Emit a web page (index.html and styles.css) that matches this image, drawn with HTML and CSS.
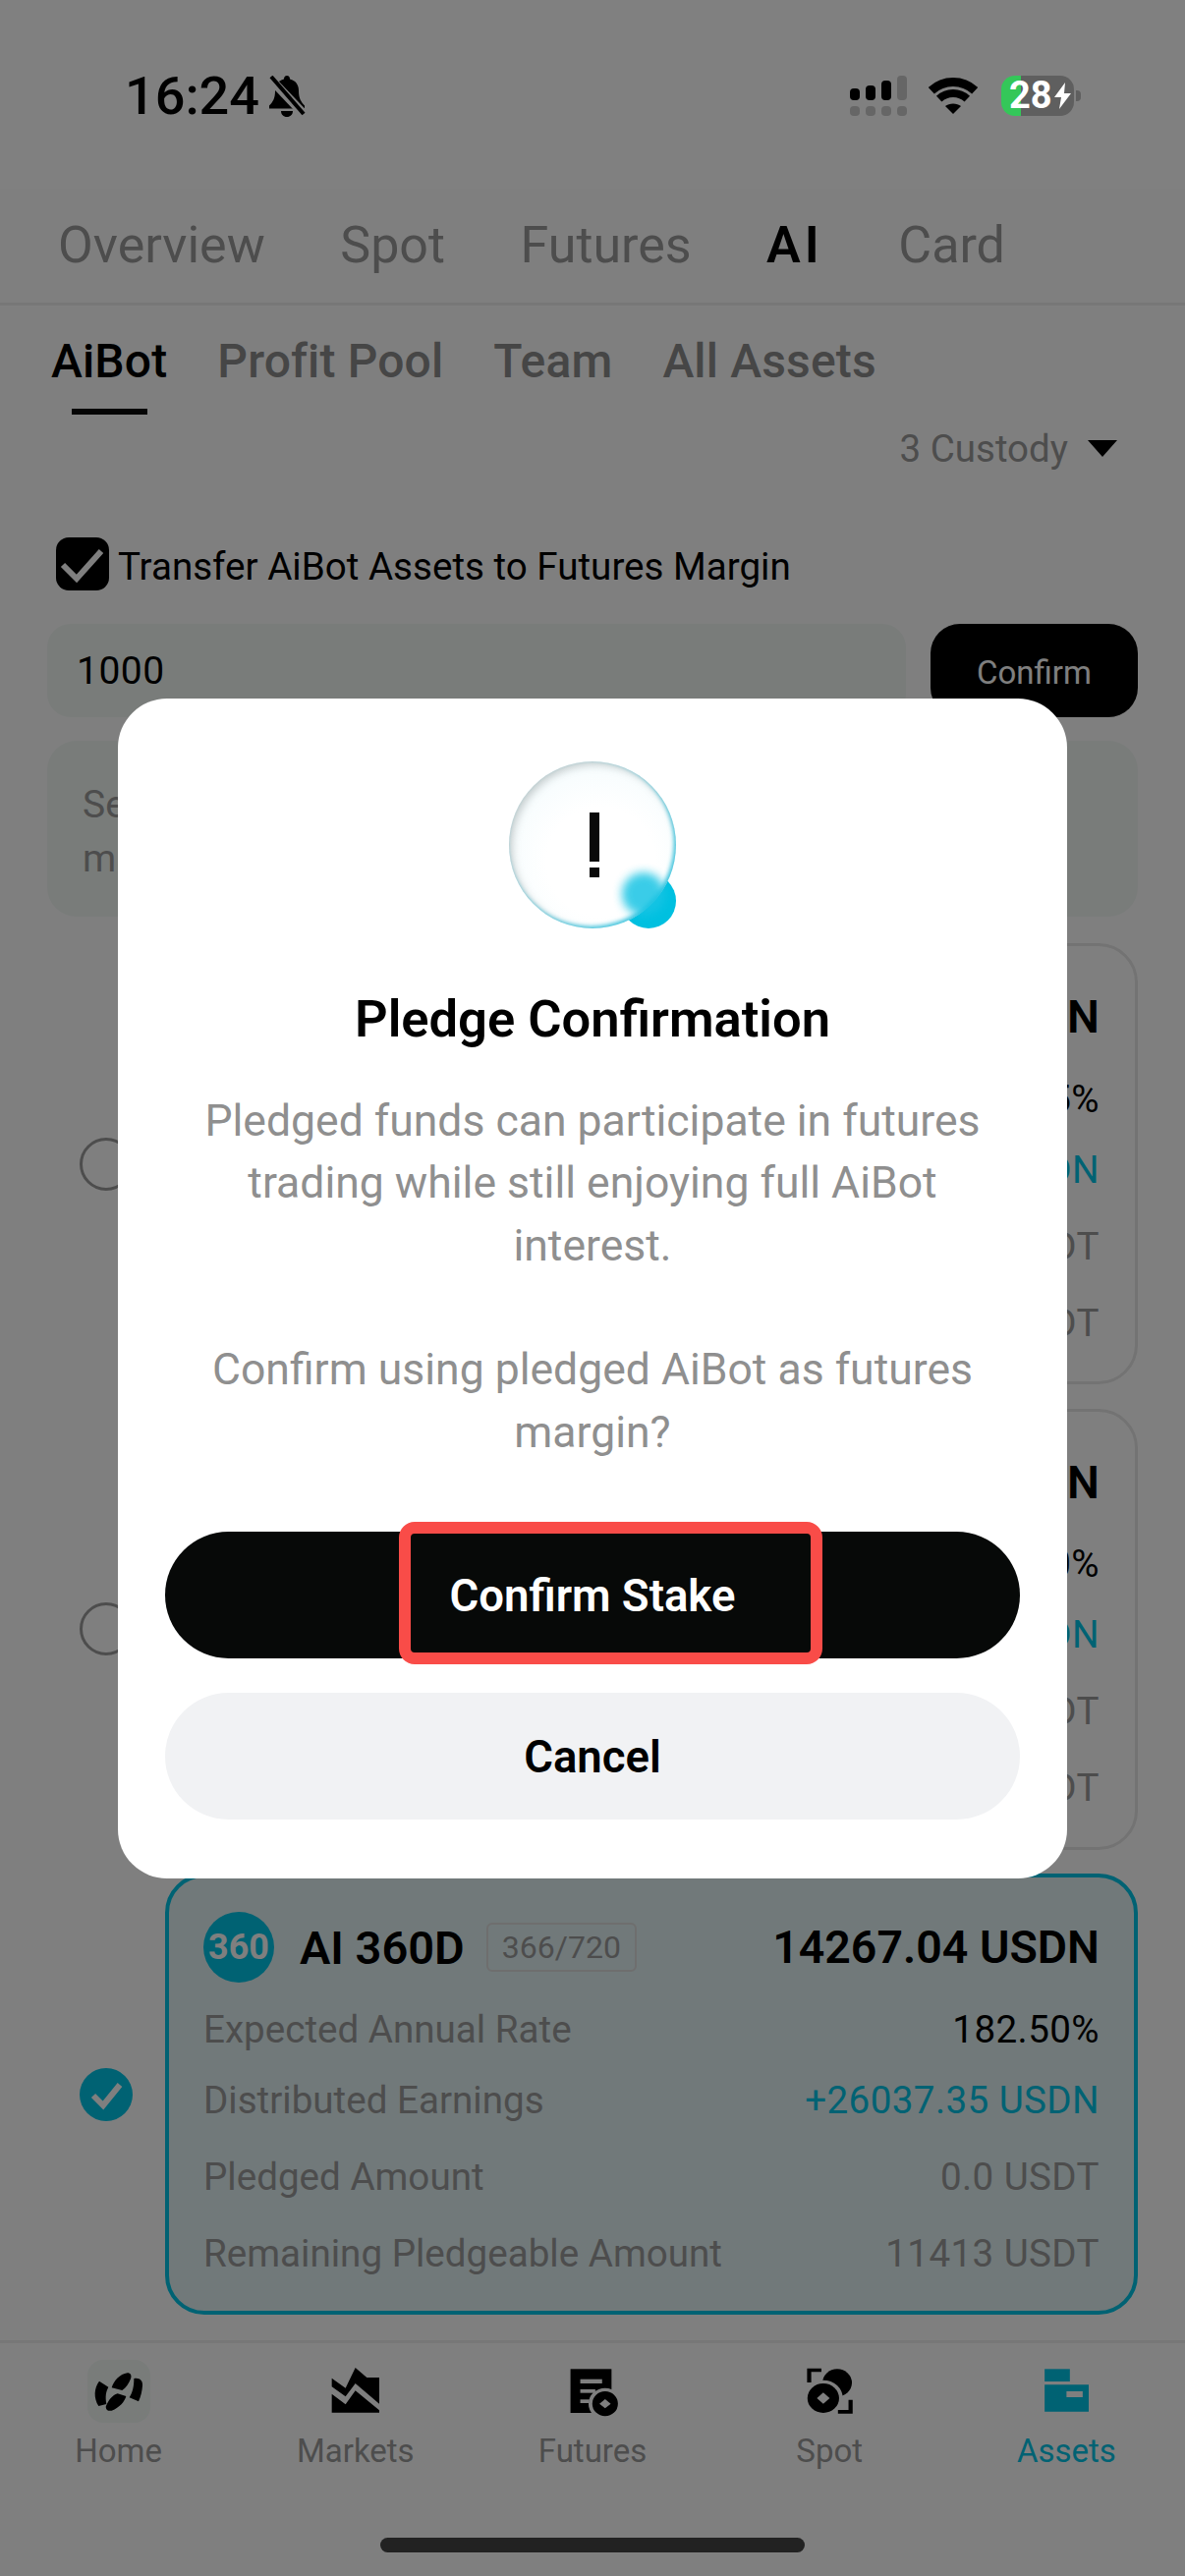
FILE: index.html
```html
<!DOCTYPE html>
<html lang="en">
<head>
<meta charset="utf-8">
<title>AiBot Assets</title>
<link rel="stylesheet" href="styles.css">
</head>
<body>
<div class="page">
  <header class="status">
    <div class="status-left">
      <span class="clock">16:24</span>
      <svg class="bell" viewBox="0 0 40 42"><path d="M20 0c2 0 3 1.500 3 3.500 6 1.500 9 6 9 12 0 7 2 11 6 15v3H2v-3c4-4 6-8 6-15 0-6 3-10.500 9-12C17 1.500 18 0 20 0zM14 36h12c0 3.500-2.500 6-6 6s-6-2.500-6-6z"/><path d="M2 2l36 38" stroke="#808080" stroke-width="9"/><path d="M4 1l33 38" stroke="#000" stroke-width="4"/></svg>
    </div>
    <div class="status-right">
      <svg class="signal" viewBox="0 0 58 41">
        <rect class="sig-on" x="0" y="13" width="10" height="12" rx="4"/><rect class="sig-on" x="16" y="10" width="10" height="15" rx="4"/><rect class="sig-on" x="32" y="5" width="10" height="20" rx="4"/><rect class="sig-off" x="48" y="0" width="10" height="25" rx="4"/>
        <rect class="sig-off" x="0" y="31" width="10" height="10" rx="4"/><rect class="sig-off" x="16" y="31" width="10" height="10" rx="4"/><rect class="sig-off" x="32" y="31" width="10" height="10" rx="4"/><rect class="sig-off" x="48" y="31" width="10" height="10" rx="4"/>
      </svg>
      <svg class="wifi" viewBox="0 0 50 37">
        <path d="M2.800 13.300a32.500 32.500 0 0 1 44.400 0" fill="none" stroke="#000" stroke-width="9"/>
        <path d="M10.700 21.600a21 21 0 0 1 28.600 0" fill="none" stroke="#000" stroke-width="8"/>
        <path d="M25 37l-8-8c4-3.500 12-3.500 16 0z"/>
      </svg>
      <div class="battery">
        <div class="battery-body"><span class="battery-num">28</span><svg class="bolt" viewBox="0 0 17 27"><path d="M11 0L0 15h7l-2 12L17 11h-7z" fill="#fff"/></svg></div>
        <span class="battery-tip"></span>
      </div>
    </div>
  </header>

  <nav class="tabs">
    <span>Overview</span><span>Spot</span><span>Futures</span><span class="tab-on">AI</span><span>Card</span>
  </nav>

  <nav class="subtabs">
    <span class="subtab-on">AiBot</span><span>Profit Pool</span><span>Team</span><span>All Assets</span>
  </nav>

  <div class="custody"><span>3 Custody</span><i class="caret"></i></div>

  <label class="transfer">
    <span class="checkbox"><svg viewBox="0 0 54 54"><path d="M7 28l14 14L46 14" fill="none" stroke="#fff" stroke-width="6"/></svg></span>
    <span class="transfer-text">Transfer AiBot Assets to Futures Margin</span>
  </label>

  <div class="amount">
    <div class="amount-input">1000</div>
    <div class="amount-btn">Confirm</div>
  </div>

  <div class="note">Select the AiBot assets you want to pledge as futures<br>margin for your trading account.</div>

  <section class="plans">
    <div class="plan-row">
      <span class="radio"></span>
      <article class="plan">
        <div class="plan-head"><span class="plan-badge">30</span><strong>AI 30D</strong><em>12/30</em><b>1250.00 USDN</b></div>
        <div class="kv"><span>Expected Annual Rate</span><span class="ink">91.25%</span></div>
        <div class="kv"><span>Distributed Earnings</span><span class="teal">+312.50 USDN</span></div>
        <div class="kv"><span>Pledged Amount</span><span>0.0 USDT</span></div>
        <div class="kv"><span>Remaining Pledgeable Amount</span><span>1000 USDT</span></div>
      </article>
    </div>
    <div class="plan-row">
      <span class="radio"></span>
      <article class="plan">
        <div class="plan-head"><span class="plan-badge">90</span><strong>AI 90D</strong><em>45/90</em><b>5200.00 USDN</b></div>
        <div class="kv"><span>Expected Annual Rate</span><span class="ink">120.00%</span></div>
        <div class="kv"><span>Distributed Earnings</span><span class="teal">+1860.20 USDN</span></div>
        <div class="kv"><span>Pledged Amount</span><span>0.0 USDT</span></div>
        <div class="kv"><span>Remaining Pledgeable Amount</span><span>4160 USDT</span></div>
      </article>
    </div>
    <div class="plan-row">
      <span class="radio radio-on"><svg viewBox="0 0 54 54"><path d="M14 28l10 10 17-21" fill="none" stroke="#fff" stroke-width="6"/></svg></span>
      <article class="plan plan-on">
        <div class="plan-head"><span class="plan-badge">360</span><strong>AI 360D</strong><em>366/720</em><b>14267.04 USDN</b></div>
        <div class="kv"><span>Expected Annual Rate</span><span class="ink">182.50%</span></div>
        <div class="kv"><span>Distributed Earnings</span><span class="teal">+26037.35 USDN</span></div>
        <div class="kv"><span>Pledged Amount</span><span>0.0 USDT</span></div>
        <div class="kv"><span>Remaining Pledgeable Amount</span><span>11413 USDT</span></div>
      </article>
    </div>
  </section>

  <footer class="bottom">
    <div class="nav-item">
      <span class="nav-icon nav-home"><svg viewBox="116 35 192 192"><path d="M152 100l28 18c-8 15-10 30-6 52l-24 6c-16-25-14-55 2-76zM190 120c6-20 25-42 48-45 10 0 14 8 10 18-6 15-14 27-26 35zM172 178c8-20 20-35 36-40l26 8c-4 16-20 35-44 44-10 2-18-2-18-12zM258 92c14-4 28 4 26 22-1 16-5 34-12 48l-28-12c10-16 14-34 14-58z"/></svg></span>
      <span>Home</span>
    </div>
    <div class="nav-item">
      <span class="nav-icon"><svg viewBox="840 36 192 192"><path d="M863 92l42 30 30-62 35 30h38v80l-73-62-30 40-42-30zM863 140l42 32 30-42 73 60v7H863z"/></svg></span>
      <span>Markets</span>
    </div>
    <div class="nav-item">
      <span class="nav-icon"><svg viewBox="81 36 167 192" preserveAspectRatio="none"><rect x="106" y="64" width="109" height="134"/><rect class="cut" x="132" y="95" width="58" height="13"/><rect class="cut" x="132" y="126" width="40" height="11"/><rect class="cut" x="132" y="157" width="24" height="11"/><ellipse class="cut" cx="198" cy="170" rx="44" ry="48"/><ellipse cx="198" cy="170" rx="34" ry="38"/><path class="cut" d="M198 156l-15 14 15 14 15-14z"/></svg></span>
      <span>Futures</span>
    </div>
    <div class="nav-item">
      <span class="nav-icon"><svg viewBox="710.500 36 167 192" preserveAspectRatio="none"><ellipse cx="815" cy="106" rx="39" ry="42"/><ellipse class="cut" cx="778" cy="153" rx="52" ry="55"/><ellipse cx="778" cy="153" rx="42" ry="45"/><path class="cut" d="M778 136l-17 17 17 17 17-17z"/><path d="M735 62h38v11h-27v32h-11zM845 158h11v42h-39v-11h28z"/></svg></span>
      <span>Spot</span>
    </div>
    <div class="nav-item nav-on">
      <span class="nav-icon"><svg viewBox="1340.500 36 167 192" preserveAspectRatio="none"><rect x="1367" y="64" width="67" height="38"/><path fill-rule="evenodd" d="M1367 112h117v82h-117zM1425 132v18h43v-18z"/></svg></span>
      <span>Assets</span>
    </div>
  </footer>
  <div class="home-bar"></div>

  <div class="overlay">
    <div class="modal">
      <div class="bubble">
        <span class="dot"></span>
        <span class="glass"></span>
        <span class="blur"></span>
        <span class="mark"></span>
        <span class="mark-dot"></span>
      </div>
      <h2 class="modal-title">Pledge Confirmation</h2>
      <p class="modal-text">Pledged funds can participate in futures trading while still enjoying full AiBot interest.</p>
      <p class="modal-text modal-text-2">Confirm using pledged AiBot as futures margin?</p>
      <div class="btn btn-dark"><span>Confirm Stake</span><i class="highlight"></i></div>
      <div class="btn btn-light">Cancel</div>
    </div>
  </div>
</div>
</body>
</html>
```

FILE: styles.css
```css
* { box-sizing: border-box; margin: 0; padding: 0; }
html, body { width: 1206px; height: 2622px; overflow: hidden; background: #fff; }
body { font-family: Roboto, "Noto Sans", "Liberation Sans", sans-serif; color: #000; }
.page { position: relative; width: 1206px; height: 2622px; overflow: hidden; background: #fff; }

/* status bar sits above the dim layer */
.status { position: relative; z-index: 5; height: 192px; display: flex; justify-content: space-between; align-items: flex-start; padding: 77px 106px 0 127px; background: #808080; }
.status-left { display: flex; align-items: center; gap: 8px; height: 42px; }
.clock { font-size: 54px; line-height: 42px; font-weight: 500; }
.bell { width: 40px; height: 42px; }
.status-right { display: flex; align-items: flex-start; }
.signal { width: 58px; height: 41px; }
.sig-on { fill: #000; }
.sig-off { fill: #666; }
.wifi { width: 50px; height: 37px; margin: 2px 24px 0 22px; }
.battery { display: flex; align-items: center; gap: 2px; }
.battery-body { width: 74px; height: 41px; border-radius: 14px; display: flex; align-items: center; padding-left: 8px; gap: 2px; background: linear-gradient(90deg, #34c759 20px, #5f5f5f 20px); color: #fff; }
.battery-num { font-size: 38px; line-height: 41px; font-weight: 700; }
.bolt { width: 17px; height: 27px; }
.battery-tip { width: 5px; height: 11px; border-radius: 0 4px 4px 0; background: #5f5f5f; }

.tabs { height: 119px; display: flex; gap: 76.500px; padding: 0 0 0 59px; align-items: flex-start; font-size: 52px; line-height: 115px; color: #9a9a9a; border-bottom: 3px solid #efefef; }
.tab-on { color: #000; font-weight: 600; letter-spacing: 4px; }

.subtabs { height: 111px; display: flex; gap: 51px; padding: 25px 0 0 52px; font-size: 48px; line-height: 64px; font-weight: 500; letter-spacing: .15px; color: #8c8c8c; }
.subtab-on { color: #000; position: relative; }
.subtab-on::after { content: ""; position: absolute; left: 21px; top: 80px; width: 77px; height: 6px; background: #0a0a0a; }

.custody { height: 42px; display: flex; justify-content: flex-end; align-items: center; gap: 20px; padding-right: 69px; margin-top: 13px; font-size: 38.500px; color: #9a9a9a; }
.caret { width: 0; height: 0; border-left: 15px solid transparent; border-right: 15px solid transparent; border-top: 17px solid #000; }

.transfer { display: flex; align-items: center; gap: 9px; padding-left: 57px; height: 54px; margin-top: 70px; font-size: 38.600px; }
.transfer-text { padding-top: 5px; }
.checkbox { width: 54px; height: 54px; border-radius: 13px; background: #000; display: block; flex: none; }
.checkbox svg { display: block; width: 54px; height: 54px; }

.amount { display: flex; gap: 25px; padding: 0 48px; margin-top: 34px; height: 95px; }
.amount-input { flex: 1; border-radius: 24px; background: #f2f8f5; padding-left: 30px; font-size: 39px; letter-spacing: .5px; line-height: 97px; }
.amount-btn { width: 211px; border-radius: 30px; background: #000; color: #fff; font-size: 33px; line-height: 100px; text-align: center; }

.note { margin: 24px 48px 0; height: 179px; border-radius: 30px; background: #f2f8f5; padding: 38px 36px; font-size: 39px; line-height: 55px; color: #9a9a9a; white-space: nowrap; overflow: hidden; }

.plans { display: flex; flex-direction: column; gap: 24.500px; margin-top: 27px; padding: 0 48px 0 81px; }
.plan-row { display: flex; align-items: center; gap: 33px; }
.radio { width: 54px; height: 54px; border-radius: 50%; border: 3px solid #9a9a9a; flex: none; }
.radio svg { display: block; width: 54px; height: 54px; }
.radio-on { border: 0; background: #00c4e6; }
.plan { flex: 1; height: 449px; border: 3px solid #e6e6e6; border-radius: 40px; padding: 36px 36px 0; }
.plan-on { border: 4px solid #00c4e6; background: #e2f2f4; padding: 35px 35px 0; }
.plan-head { display: flex; align-items: center; height: 72px; margin-bottom: 14px; }
.plan-badge { width: 72px; height: 72px; border-radius: 50%; background: #00c4e6; color: #fff; font-size: 36px; font-weight: 700; line-height: 72px; text-align: center; flex: none; }
.plan-head strong { font-size: 47px; font-weight: 600; margin-left: 26px; }
.plan-head em { font-style: normal; font-size: 32px; color: #9a9a9a; border: 2px solid #dcdcdc; border-radius: 6px; margin-left: 22px; height: 50px; padding: 0 14px; line-height: 46px; }
.plan-head b { margin-left: auto; font-size: 46.500px; font-weight: 600; }
.kv { display: flex; justify-content: space-between; align-items: center; height: 78px; font-size: 38.600px; color: #9a9a9a; white-space: nowrap; }
.kv span:last-child { letter-spacing: .4px; }
.plan-head + .kv { height: 66px; }
.kv .ink { color: #000; letter-spacing: 2px; }
.teal { color: #00c4e6; }

.bottom { position: absolute; left: 0; top: 2382px; width: 1206px; height: 240px; display: flex; border-top: 3px solid #efefef; background: #fff; padding-top: 17px; }
.nav-item { flex: 1; display: flex; flex-direction: column; align-items: center; font-size: 33px; line-height: 44px; color: #9a9a9a; }
.nav-on { color: #00c4e6; }
.nav-icon { width: 64px; height: 64px; display: block; margin-bottom: 7px; }
.nav-icon svg { display: block; width: 64px; height: 64px; fill: #000; }
.nav-icon .cut { fill: #fff; }
.nav-on .nav-icon svg { fill: #00c4e6; }
.nav-home { background: #f2f8f5; border-radius: 16px; }
.home-bar { position: absolute; left: 387px; top: 2583px; width: 432px; height: 15px; border-radius: 8px; background: #444; }

.overlay { position: absolute; left: 0; top: 0; width: 1206px; height: 2622px; background: rgba(0, 0, 0, .5); z-index: 3; display: flex; align-items: center; justify-content: center; }
.modal { width: 966px; height: 1201px; background: #fff; border-radius: 50px; padding: 64px 48px 0; display: flex; flex-direction: column; align-items: center; }

.bubble { position: relative; width: 170px; height: 170px; flex: none; }
.dot { position: absolute; left: 114px; top: 114px; width: 56px; height: 56px; border-radius: 50%; background: #00c0e0; }
.glass { position: absolute; inset: 0; border-radius: 50%; background: radial-gradient(circle at 55% 60%, #fff 40%, #f2fbfd 88%, #cfe9ee 97%); box-shadow: inset 3px 3px 8px rgba(120, 130, 130, .4), inset -2px -2px 4px rgba(40, 195, 225, .9); }
.blur { position: absolute; left: 115px; top: 113px; width: 44px; height: 44px; border-radius: 50%; background: #18c4e4; opacity: .85; filter: blur(5px); }
.mark { position: absolute; left: 82px; top: 52px; width: 10px; height: 50px; background: #0a0a0a; }
.mark-dot { position: absolute; left: 82px; top: 108px; width: 10px; height: 10px; background: #0a0a0a; }

.modal-title { margin-top: 60px; font-size: 52.500px; line-height: 64px; font-weight: 600; color: #000; white-space: nowrap; }
.modal-text { width: 830px; margin-top: 41px; font-size: 44.500px; line-height: 63.500px; text-align: center; color: #8f8f8f; }
.modal-text-2 { margin-top: 63px; }
.btn { position: relative; width: 870px; height: 129px; flex: none; border-radius: 65px; font-size: 45.500px; font-weight: 600; line-height: 132px; text-align: center; }
.btn-dark { margin-top: 69px; background: #070908; color: #fff; }
.btn-light { margin-top: 35px; background: #f1f2f4; color: #000; }
.highlight { position: absolute; left: 238px; top: -10px; width: 431px; height: 145px; border: 12px solid #f94c48; border-radius: 16px; }
```
